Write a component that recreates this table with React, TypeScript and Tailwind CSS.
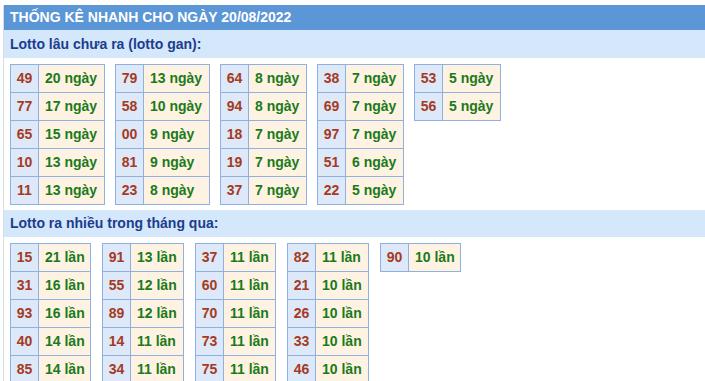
import React from "react";

const gan: { w: string; rows: [string, string][] }[] = [
  { w: "w-[66px]", rows: [["49", "20 ngày"], ["77", "17 ngày"], ["65", "15 ngày"], ["10", "13 ngày"], ["11", "13 ngày"]] },
  { w: "w-[66px]", rows: [["79", "13 ngày"], ["58", "10 ngày"], ["00", "9 ngày"], ["81", "9 ngày"], ["23", "8 ngày"]] },
  { w: "w-[58px]", rows: [["64", "8 ngày"], ["94", "8 ngày"], ["18", "7 ngày"], ["19", "7 ngày"], ["37", "7 ngày"]] },
  { w: "w-[58px]", rows: [["38", "7 ngày"], ["69", "7 ngày"], ["97", "7 ngày"], ["51", "6 ngày"], ["22", "5 ngày"]] },
  { w: "w-[58px]", rows: [["53", "5 ngày"], ["56", "5 ngày"]] },
];

const nhieu: { w: string; rows: [string, string][] }[] = [
  { w: "w-[52px]", rows: [["15", "21 lần"], ["31", "16 lần"], ["93", "16 lần"], ["40", "14 lần"], ["85", "14 lần"]] },
  { w: "w-[53px]", rows: [["91", "13 lần"], ["55", "12 lần"], ["89", "12 lần"], ["14", "11 lần"], ["34", "11 lần"]] },
  { w: "w-[52px]", rows: [["37", "11 lần"], ["60", "11 lần"], ["70", "11 lần"], ["73", "11 lần"], ["75", "11 lần"]] },
  { w: "w-[53px]", rows: [["82", "11 lần"], ["21", "10 lần"], ["26", "10 lần"], ["33", "10 lần"], ["46", "10 lần"]] },
  { w: "w-[52px]", rows: [["90", "10 lần"]] },
];

function Table({ rows, w }: { rows: [string, string][]; w: string }) {
  return (
    <div className="flex flex-col self-start shrink-0 border-l border-t border-[#8eb1e2]">
      {rows.map(([n, t], i) => (
        <div key={i} className="flex">
          <div className="w-[28px] h-[28px] flex items-center justify-center border-r border-b border-[#8eb1e2] bg-[#dde8f8] text-[#a53a23]">
            {n}
          </div>
          <div className={`${w} h-[28px] flex items-center pl-[6px] border-r border-b border-[#8eb1e2] bg-[#fef3e2] text-[#1b7a1b] whitespace-nowrap overflow-hidden`}>
            {t}
          </div>
        </div>
      ))}
    </div>
  );
}

export default function App() {
  return (
    <div className="w-[705px] h-[381px] overflow-hidden bg-white pt-[5px] text-[14px] font-bold" style={{ fontFamily: '"Liberation Sans", Arial, sans-serif' }}>
      <div className="ml-[3px] border-l border-[#d6dde8] min-h-[400px]">
        <div className="h-[25px] bg-[#5b96d6] text-white flex items-center pl-[6px]">
          THỐNG KÊ NHANH CHO NGÀY 20/08/2022
        </div>
        <div className="h-[28px] bg-[#d5e7fb] text-[#1b3d8e] flex items-center pl-[6px]">
          Lotto lâu chưa ra (lotto gan):
        </div>
        <div className="flex gap-[10px] pl-[6px] pt-[6px] pb-[5px]">
          {gan.map((t, i) => (
            <Table key={i} rows={t.rows} w={t.w} />
          ))}
        </div>
        <div className="h-[27px] bg-[#d5e7fb] text-[#1b3d8e] flex items-center pl-[6px]">
          Lotto ra nhiều trong tháng qua:
        </div>
        <div className="flex gap-[11px] pl-[6px] pt-[6px]">
          {nhieu.map((t, i) => (
            <Table key={i} rows={t.rows} w={t.w} />
          ))}
        </div>
      </div>
    </div>
  );
}
